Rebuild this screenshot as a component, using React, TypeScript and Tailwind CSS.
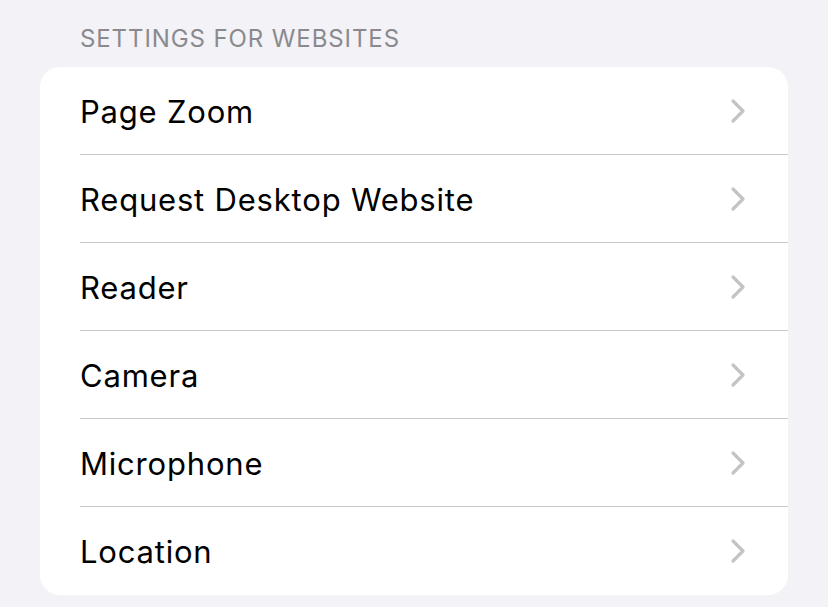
import React from 'react';

const rows = ['Page Zoom', 'Request Desktop Website', 'Reader', 'Camera', 'Microphone', 'Location'];

const Chevron: React.FC = () => (
  <svg width="16" height="26" viewBox="0 0 16 26" fill="none">
    <path d="M3 3 L13 13 L3 23" stroke="#c4c4c7" strokeWidth="3.2" strokeLinecap="round" strokeLinejoin="round" />
  </svg>
);

const App: React.FC = () => {
  return (
    <div
      className="w-[828px] h-[607px] bg-[#f2f2f7] px-[40px] pt-[25px] overflow-hidden"
      style={{ fontFamily: 'Inter, "Noto Sans", sans-serif' }}
    >
      <div className="pl-[40px] text-[24px] leading-[28px] text-[#8a8a8e] tracking-[0.9px] h-[42px]">
        SETTINGS FOR WEBSITES
      </div>
      <div className="bg-white rounded-[20px] w-[748px] overflow-hidden">
        {rows.map((label, i) => (
          <div key={label} className="flex items-stretch h-[88px] pl-[40px]">
            <div
              className={
                'flex flex-1 items-center justify-between pr-[42px] ' +
                (i < rows.length - 1 ? 'border-b border-[#c8c8cc]' : '')
              }
            >
              <span className="text-[31px] leading-[36px] pt-[2px] text-black tracking-[0.8px]">{label}</span>
              <Chevron />
            </div>
          </div>
        ))}
      </div>
    </div>
  );
};

export default App;
